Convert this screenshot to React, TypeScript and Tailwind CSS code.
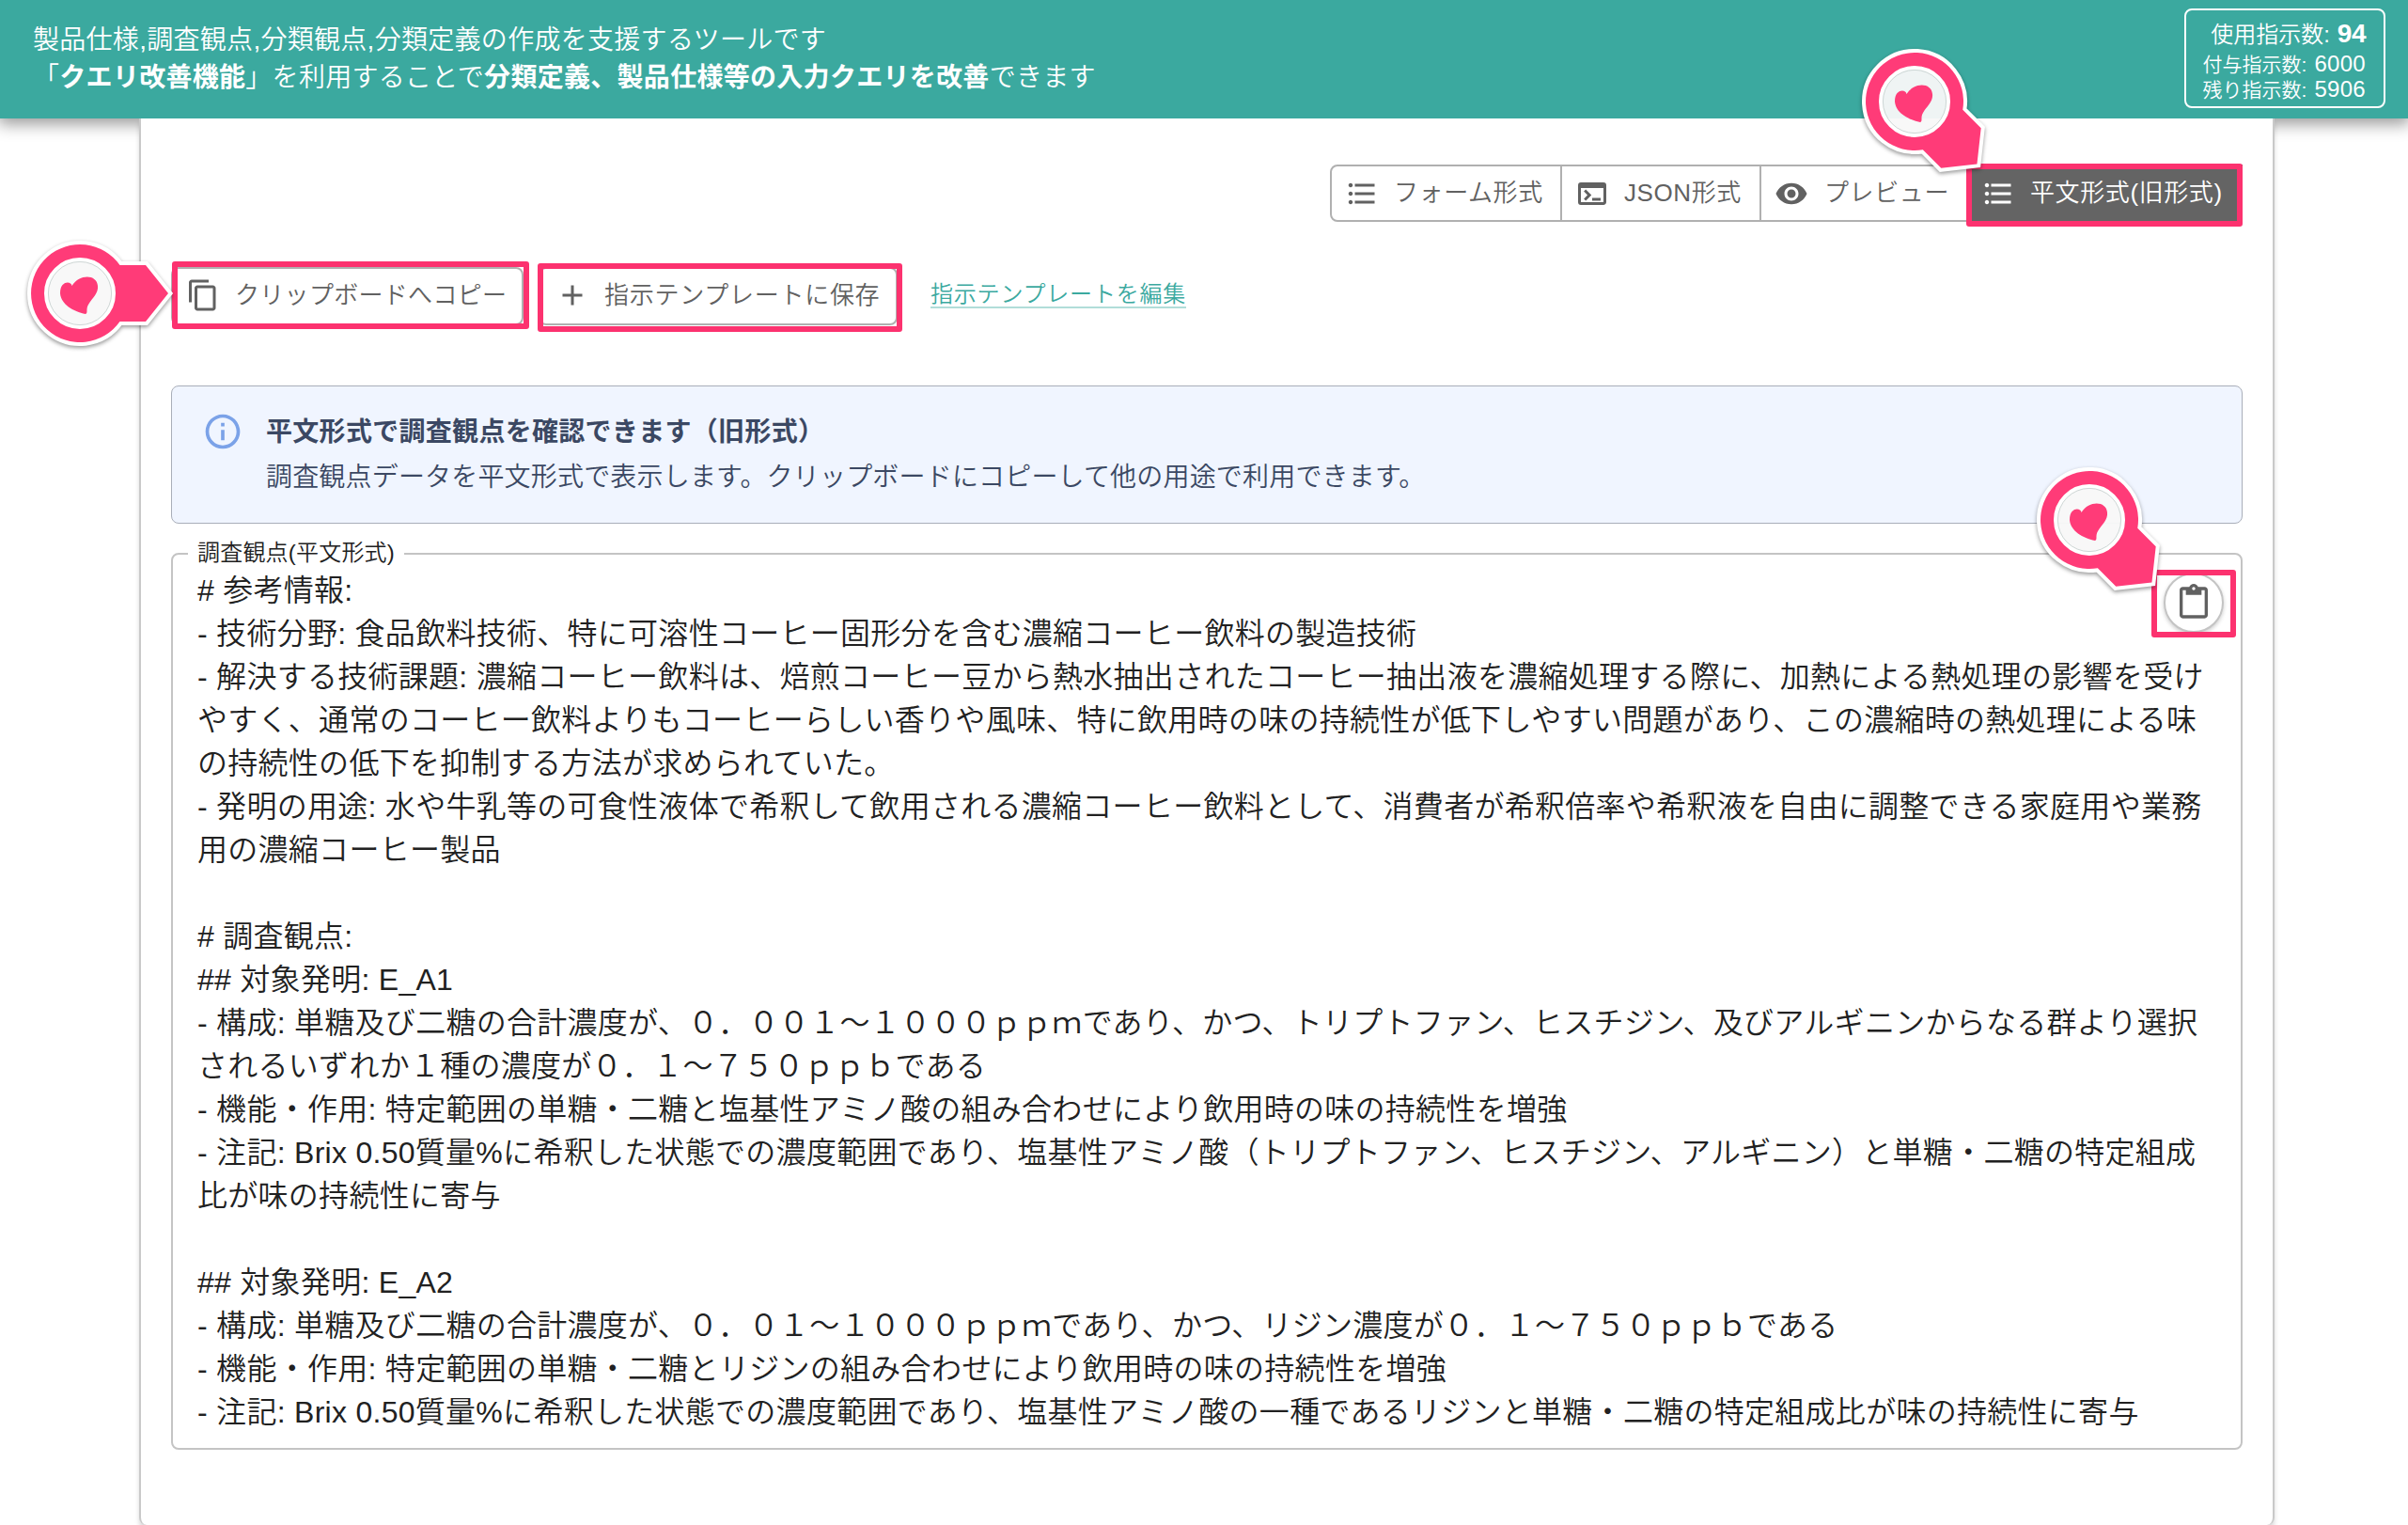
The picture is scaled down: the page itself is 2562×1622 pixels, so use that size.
import React from "react";
import { MdFormatListBulleted, MdOutlineTerminal, MdVisibility, MdContentCopy, MdAdd, MdInfoOutline, MdContentPaste } from "react-icons/md";

const INTRO = `# 参考情報:
- 技術分野: 食品飲料技術、特に可溶性コーヒー固形分を含む濃縮コーヒー飲料の製造技術
- 解決する技術課題: 濃縮コーヒー飲料は、焙煎コーヒー豆から熱水抽出されたコーヒー抽出液を濃縮処理する際に、加熱による熱処理の影響を受け
やすく、通常のコーヒー飲料よりもコーヒーらしい香りや風味、特に飲用時の味の持続性が低下しやすい問題があり、この濃縮時の熱処理による味
の持続性の低下を抑制する方法が求められていた。
- 発明の用途: 水や牛乳等の可食性液体で希釈して飲用される濃縮コーヒー飲料として、消費者が希釈倍率や希釈液を自由に調整できる家庭用や業務
用の濃縮コーヒー製品

# 調査観点:
## 対象発明: E_A1
- 構成: 単糖及び二糖の合計濃度が、０．００１～１０００ｐｐｍであり、かつ、トリプトファン、ヒスチジン、及びアルギニンからなる群より選択
されるいずれか１種の濃度が０．１～７５０ｐｐｂである
- 機能・作用: 特定範囲の単糖・二糖と塩基性アミノ酸の組み合わせにより飲用時の味の持続性を増強
- 注記: Brix 0.50質量%に希釈した状態での濃度範囲であり、塩基性アミノ酸（トリプトファン、ヒスチジン、アルギニン）と単糖・二糖の特定組成
比が味の持続性に寄与

## 対象発明: E_A2
- 構成: 単糖及び二糖の合計濃度が、０．０１～１０００ｐｐｍであり、かつ、リジン濃度が０．１～７５０ｐｐｂである
- 機能・作用: 特定範囲の単糖・二糖とリジンの組み合わせにより飲用時の味の持続性を増強
- 注記: Brix 0.50質量%に希釈した状態での濃度範囲であり、塩基性アミノ酸の一種であるリジンと単糖・二糖の特定組成比が味の持続性に寄与`;

/** Heart badge with a pointer; the pointer turns, the heart stays upright. */
function Pin({ angle, className }: { angle: number; className: string }) {
  const outline = "M42.5 -30 H70 L94 0 L70 30 H42.5 A52 52 0 1 1 42.5 -30 Z";
  return (
    <svg viewBox="-110 -110 220 220" className={`pointer-events-none absolute size-[220px] drop-shadow-[0_2px_2px_rgba(0,0,0,0.4)] ${className}`}>
      <g transform={`rotate(${angle})`}>
        <path d={outline} fill="none" stroke="#fff" strokeWidth="8" />
        <path d={`${outline} M36 0 A36 36 0 1 0 -36 0 A36 36 0 1 0 36 0 Z`} fill="#ff3b78" fillRule="evenodd" />
      </g>
      <circle r="35" fill="#fff" fillOpacity="0.93" />
      <circle r="36" fill="none" stroke="#fff" strokeWidth="4" />
      <circle r="33.6" fill="none" stroke="#c3cdcb" strokeWidth="0.8" />
      <path d="M-8.500 -8 C-9 -13 -21 -14 -21 0 C-20 12 -7 19 6 22 C9 21 6 17 9 12 C13 5 20 0 19 -8 C18 -20 0 -21 -8.500 -8 Z" fill="#ff3b78" />
    </svg>
  );
}

const FRAME = "pointer-events-none absolute border-6 border-[#fc326f] rounded-[3px]";

export default function App() {
  return (
    <div className="relative h-[1622px] w-[2562px] overflow-hidden bg-white font-['Liberation_Sans','Noto_Sans_CJK_JP',sans-serif] font-[350] text-[#212121]">
      <header className="flex h-[126px] items-start justify-between bg-[#3ba99f] pr-6 pl-[35px] text-white shadow-[0_4px_16px_2px_rgba(0,0,0,0.4)]">
        <div className="mt-[23px] text-[28px] leading-[40px] tracking-[0.29px]">
          <p>製品仕様,調査観点,分類観点,分類定義の作成を支援するツールです</p>
          <p>「<b className="font-bold">クエリ改善機能</b>」を利用することで<b className="font-bold">分類定義、製品仕様等の入力クエリを改善</b>できます</p>
        </div>
        <div className="mt-[9px] flex h-[106px] w-[214px] flex-col rounded-lg border-2 border-white pt-[8px] pr-[19px]">
          <p className="flex h-[36px] items-baseline justify-end gap-2 text-[24px] leading-[36px]">使用指示数:<b className="text-[28px] leading-none font-bold tracking-[-0.5px]">94</b></p>
          <p className="flex h-[27px] items-baseline justify-end gap-2 text-[21px] leading-[27px]">付与指示数:<span className="text-[24px] leading-none tracking-[0.3px]">6000</span></p>
          <p className="flex h-[27px] items-baseline justify-end gap-2 text-[21px] leading-[27px]">残り指示数:<span className="text-[24px] leading-none tracking-[0.3px]">5906</span></p>
        </div>
      </header>

      <main className="relative ml-[148px] flex h-[1496px] w-[2272px] flex-col rounded-b-lg border-x-2 border-[#c9c9c9] bg-white px-8 pt-[49px] shadow-[0_5px_5px_rgba(0,0,0,0.15)]">
        <nav className="flex h-[61px] self-end text-[26px] tracking-[0.6px] text-[#616161]">
          <button className="flex w-[247px] items-center rounded-l-lg border-2 border-[#b0b0b0] pl-[14px]">
            <MdFormatListBulleted className="mr-[16px] size-9" />フォーム形式
          </button>
          <button className="flex w-[212px] items-center border-y-2 border-r-2 border-[#b0b0b0] pl-[14px]">
            <MdOutlineTerminal className="mr-[16px] size-9" />JSON形式
          </button>
          <button className="flex w-[218px] items-center border-y-2 border-[#b0b0b0] pl-[14px]">
            <MdVisibility className="mr-[17px] size-9" />プレビュー
          </button>
          <button className="relative flex w-[294px] items-center bg-[#646464] pl-[16px] text-white">
            <MdFormatListBulleted className="mr-[16px] size-9" />平文形式(旧形式)
            <span className={`${FRAME} inset-x-0 -top-[1px] -bottom-[5px]`} />
          </button>
        </nav>

        <div className="mt-[48px] flex h-[62px] items-center text-[26px] tracking-[0.74px] text-[#616161]">
          <button className="relative flex h-[62px] w-[375px] items-center rounded-lg border-2 border-[#b0b0b0] pb-[2px] pl-[14px] tracking-[0.3px]">
            <MdContentCopy className="mr-4 size-9" />クリップボードへコピー
            <span className={`${FRAME} -top-[8px] -right-[8px] -bottom-[6px] -left-[1px]`} />
          </button>
          <button className="relative ml-4 flex h-[62px] w-[382px] items-center rounded-lg border-2 border-[#b0b0b0] pb-[2px] pl-[16px]">
            <MdAdd className="mr-4 size-9" />指示テンプレートに保存
            <span className={`${FRAME} -top-[6px] -right-[7px] -bottom-[9px] -left-[3px]`} />
          </button>
          <a className="mb-[2px] ml-[35px] border-b-2 border-[#b1ddd9] text-[24px] leading-[26px] tracking-[0.8px] text-[#3ba99f]">指示テンプレートを編集</a>
        </div>

        <section className="mt-[64px] flex h-[147px] shrink-0 rounded-lg border border-[#a9aeb9] bg-[#f0f5ff] pt-[28px] pl-[32px] tracking-[0.3px] text-[#3b4863]">
          <MdInfoOutline className="mt-[-2px] mr-[24px] size-11 text-[#7ba2e8]" />
          <div className="text-[28px]">
            <h2 className="leading-[42px] font-bold">平文形式で調査観点を確認できます（旧形式）</h2>
            <p className="mt-[7px] leading-[40px] tracking-[0.18px]">調査観点データを平文形式で表示します。クリップボードにコピーして他の用途で利用できます。</p>
          </div>
        </section>

        <section className="relative mt-[31px] h-[954px] shrink-0 rounded-lg border-2 border-[#c4c4c4] pt-[15px] pl-[26px]">
          <span className="absolute -top-[18px] left-[16px] bg-white px-[10px] text-[24px] leading-[32px] tracking-[0.2px]">調査観点(平文形式)</span>
          <pre className="font-['Liberation_Sans','Noto_Sans_CJK_JP',sans-serif] text-[32px] leading-[46px] tracking-[0.28px]">{INTRO}</pre>
          <button className="absolute top-[19px] right-[18px] flex size-16 items-center justify-center rounded-full border-2 border-[#c4c4c4] bg-white text-[#616161] shadow-[0_2px_4px_rgba(0,0,0,0.2)]">
            <MdContentPaste className="size-10" />
          </button>
          <span className={`${FRAME} top-[16px] right-[5px] h-[72px] w-[90px]`} />
        </section>
      </main>

      <Pin angle={45} className="top-[-2px] left-[1927px] z-20" />
      <Pin angle={0} className="top-[202px] left-[-25px] z-20" />
      <Pin angle={45} className="top-[443px] left-[2113px] z-20" />
    </div>
  );
}
